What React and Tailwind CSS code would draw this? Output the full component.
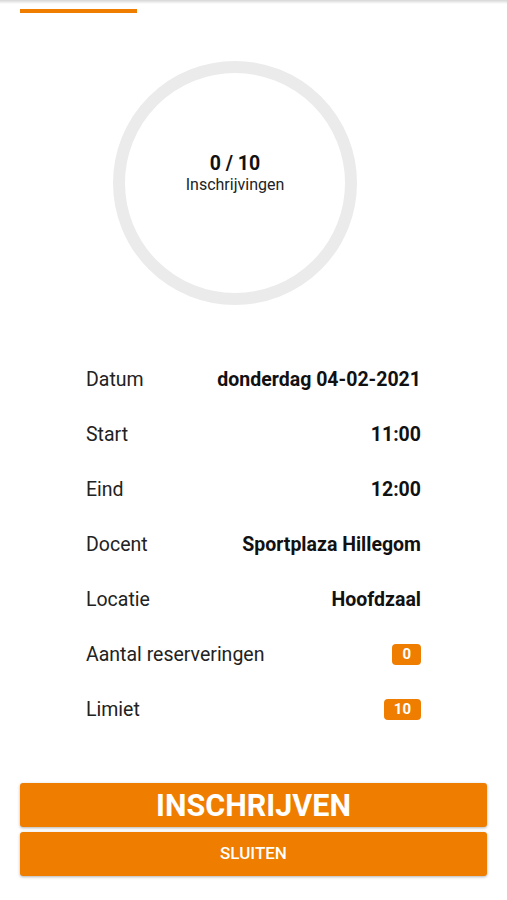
import React from "react";

// Lesson details
const rows = [
  { label: "Datum", value: "donderdag 04-02-2021" },
  { label: "Start", value: "11:00" },
  { label: "Eind", value: "12:00" },
  { label: "Docent", value: "Sportplaza Hillegom" },
  { label: "Locatie", value: "Hoofdzaal" },
  { label: "Aantal reserveringen", badge: "0" },
  { label: "Limiet", badge: "10" },
];

const App = () => {
  return (
    <div className="min-h-[900px] bg-white font-['Roboto',sans-serif] text-[#1a1a1a]">
      {/* top shadow */}
      <div className="h-[4px] bg-gradient-to-b from-[#d6d6d6] to-white"></div>

      {/* tab indicator */}
      <div className="mt-[5px] ml-[20px] w-[117px] h-[4px] bg-[#ef7d00]"></div>

      {/* progress ring */}
      <div className="mt-[48px] ml-[113px] w-[244px] h-[244px] rounded-full border-[12px] border-[#ebebeb] flex flex-col items-center pt-[79px]">
        <div className="text-[19.5px] font-bold leading-[23px] text-[#111]">0 / 10</div>
        <div className="text-[16px] leading-[20px] text-[#222]">Inschrijvingen</div>
      </div>

      {/* details */}
      <div className="mt-[47px] px-[86px]">
        {rows.map((r) => (
          <div key={r.label} className="h-[55px] flex items-center justify-between">
            <span className="text-[19.5px] text-[#222]">{r.label}</span>
            {r.badge ? (
              <span className="h-[21px] px-[10px] rounded-[4px] bg-[#ef7d00] text-white text-[15px] font-bold leading-[21px]">
                {r.badge}
              </span>
            ) : (
              <span className="text-[19.5px] font-bold text-[#111]">{r.value}</span>
            )}
          </div>
        ))}
      </div>

      {/* buttons */}
      <div className="mt-[46px] mx-[20px] flex flex-col gap-[5px]">
        <button className="h-[44px] rounded-[3px] bg-[#ef7d00] text-white text-[30.5px] font-bold shadow-[0_1px_3px_rgba(0,0,0,0.3)]">
          INSCHRIJVEN
        </button>
        <button className="h-[44px] rounded-[3px] bg-[#ef7d00] text-white text-[17px] font-medium shadow-[0_1px_3px_rgba(0,0,0,0.3)]">
          SLUITEN
        </button>
      </div>
    </div>
  );
};

export default App;
